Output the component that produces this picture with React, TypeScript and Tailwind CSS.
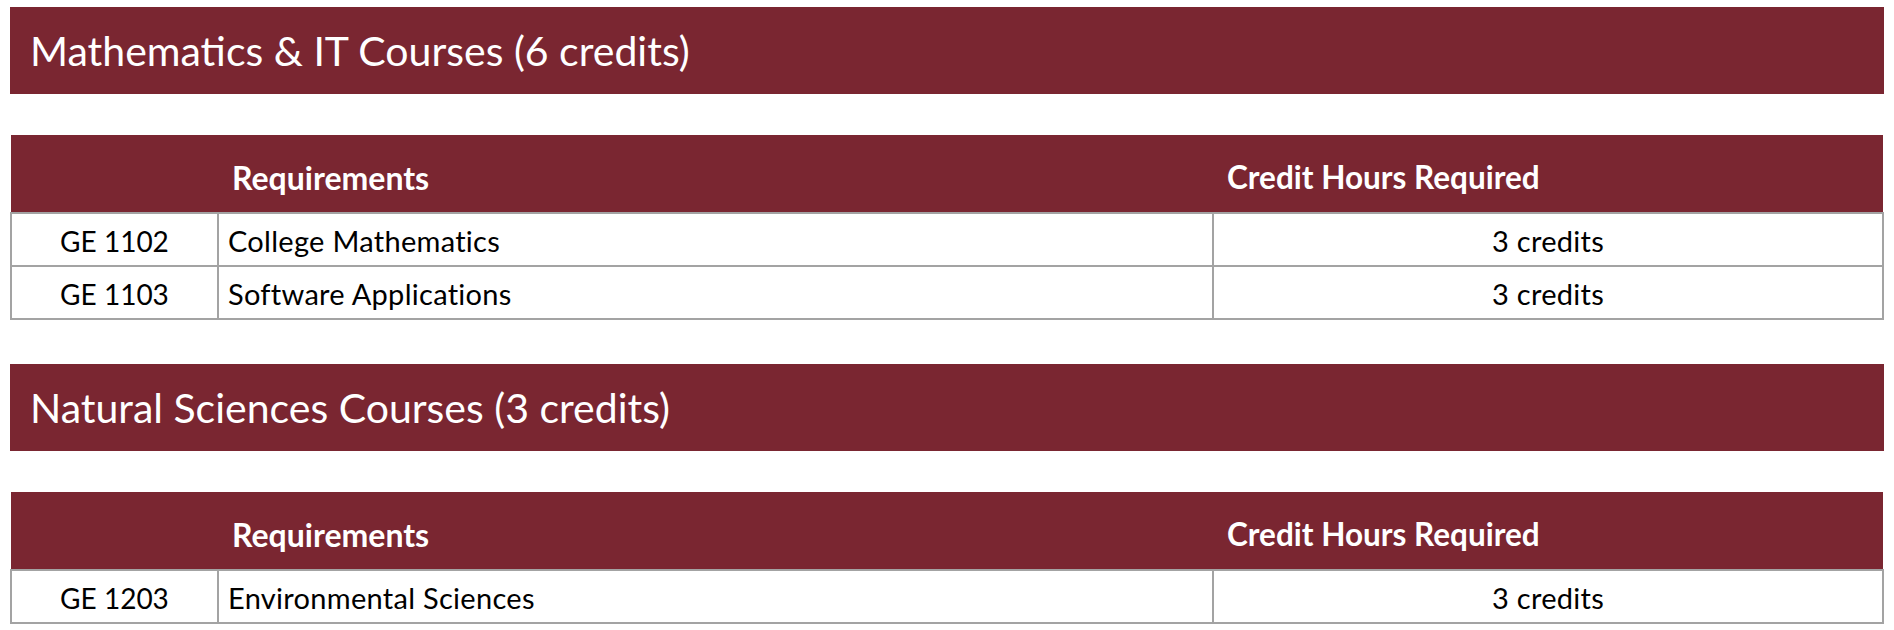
import React from 'react';

type Course = { code: string; name: string; credits: string };

const sections: { title: string; courses: Course[] }[] = [
  {
    title: 'Mathematics & IT Courses (6 credits)',
    courses: [
      { code: 'GE 1102', name: 'College Mathematics', credits: '3 credits' },
      { code: 'GE 1103', name: 'Software Applications', credits: '3 credits' },
    ],
  },
  {
    title: 'Natural Sciences Courses (3 credits)',
    courses: [{ code: 'GE 1203', name: 'Environmental Sciences', credits: '3 credits' }],
  },
];

function CourseTable({ courses }: { courses: Course[] }) {
  return (
    <table className="w-full table-fixed border-collapse text-[29px] tracking-[0.01em] text-black">
      <colgroup>
        <col className="w-[207px]" />
        <col className="w-[995px]" />
        <col />
      </colgroup>
      <thead>
        <tr className="h-[78px] bg-[#7a2631] text-white">
          <th />
          <th className="pl-[14px] pt-[8px] text-left text-[32px] font-bold tracking-normal">Requirements</th>
          <th className="pl-[14px] pt-[8px] text-left text-[31.5px] font-bold tracking-normal">Credit Hours Required</th>
        </tr>
      </thead>
      <tbody>
        {courses.map((c) => (
          <tr key={c.code} className="h-[53px]">
            <td className="border-2 border-[#a3a3a3] pt-[2px] text-center text-[28px] tracking-normal">{c.code}</td>
            <td className="border-2 border-[#a3a3a3] pl-[9px] pt-[2px]">{c.name}</td>
            <td className="border-2 border-[#a3a3a3] pt-[2px] text-center">{c.credits}</td>
          </tr>
        ))}
      </tbody>
    </table>
  );
}

export default function App() {
  return (
    <div className="min-h-screen bg-white px-[10px] pt-[7px] font-['Lato',sans-serif]">
      {sections.map((s, i) => (
        <section key={s.title} className={i > 0 ? 'mt-[44px]' : ''}>
          <div className="flex h-[87px] items-center bg-[#7a2631] px-[20px]">
            <h2 className="text-[41px] leading-none font-normal text-white">{s.title}</h2>
          </div>
          <div className="mt-[41px]">
            <CourseTable courses={s.courses} />
          </div>
        </section>
      ))}
    </div>
  );
}
